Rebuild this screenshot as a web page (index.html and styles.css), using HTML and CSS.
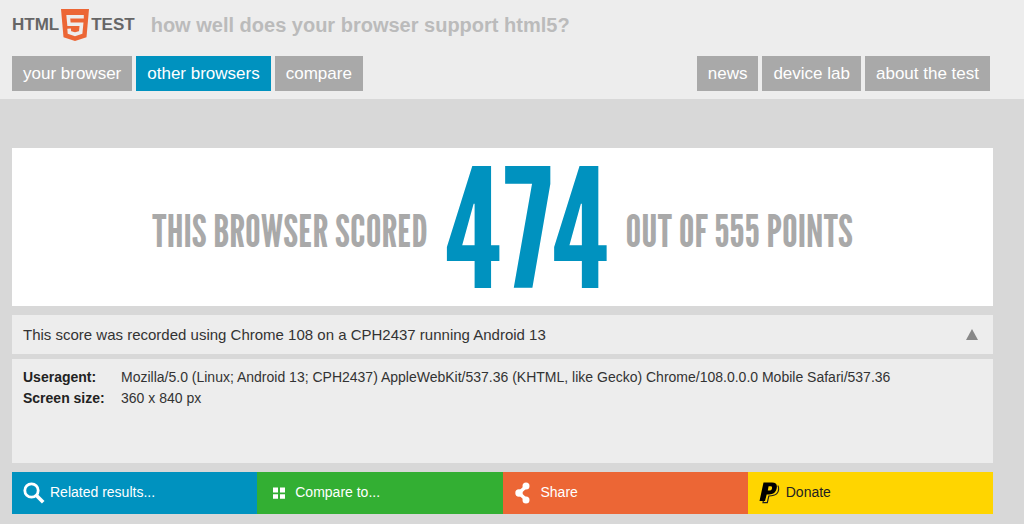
FILE: index.html
```html
<!DOCTYPE html>
<html lang="en">

<head>
  <meta charset="UTF-8" />
  <meta name="viewport" content="width=device-width, initial-scale=1" />
  <title>HTML5test - How well does your browser support HTML5?</title>
  <link rel="stylesheet" href="styles.css">
</head>

<body>
  <header class="header">
    <div class="brand">
      <a href="#" class="logo">
        <span>HTML</span>
        <svg class="shield" viewBox="0 0 28 32" role="img" aria-label="5">
          <path fill="#ec6635" d="M0 0h28l-2.500 28.200L14 32 2.500 28.200z" />
          <path fill="none" stroke="#ededed" stroke-width="3.600" d="M22.800 7.800H7.300l.7 7.500h12.500l-.8 8.200L14 25.300l-5.600-1.800-.3-3.900" />
        </svg>
        <span>TEST</span>
      </a>
      <h1>how well does your browser support html5?</h1>
    </div>

    <nav class="nav">
      <div class="nav-group">
        <a href="#">your browser</a>
        <a href="#" class="selected">other browsers</a>
        <a href="#">compare</a>
      </div>
      <div class="nav-group">
        <a href="#">news</a>
        <a href="#">device lab</a>
        <a href="#">about the test</a>
      </div>
    </nav>
  </header>

  <main class="page">
    <h2 class="score">
      <span>THIS BROWSER SCORED</span>
      <strong>474</strong>
      <span>OUT OF 555 POINTS</span>
    </h2>

    <button class="recorded" type="button" aria-expanded="true">
      <span>This score was recorded using Chrome 108 on a CPH2437 running Android 13</span>
      <svg class="arrow" viewBox="0 0 12 11" aria-hidden="true">
        <path d="M6 0l6 11H0z" />
      </svg>
    </button>

    <div class="details">
      <table>
        <tr>
          <th scope="row">Useragent:</th>
          <td>Mozilla/5.0 (Linux; Android 13; CPH2437) AppleWebKit/537.36 (KHTML, like Gecko) Chrome/108.0.0.0 Mobile Safari/537.36</td>
        </tr>
        <tr>
          <th scope="row">Screen size:</th>
          <td>360 x 840 px</td>
        </tr>
      </table>
    </div>

    <div class="actions">
      <button class="related" type="button">
        <svg viewBox="0 0 22 22" aria-hidden="true">
          <circle cx="8.500" cy="8.500" r="6.700" fill="none" stroke="#fff" stroke-width="2.800" />
          <path fill="none" stroke="#fff" stroke-width="3.600" d="M13 13l7.200 7.200" />
        </svg>
        <span>Related results...</span>
      </button>
      <button class="compare" type="button">
        <svg viewBox="0 0 22 22" aria-hidden="true">
          <path fill="#fff" d="M5 5.500h5v5H5zM12 5.500h5v5h-5zM5 12.300h5v4.500H5zM12 12.300h5v4.500h-5z" />
        </svg>
        <span>Compare to...</span>
      </button>
      <button class="share" type="button">
        <svg viewBox="0 0 22 22" aria-hidden="true">
          <path fill="none" stroke="#fff" stroke-width="3.500" d="M12 4.500L5 11l7 6.500" />
          <circle cx="12" cy="4" r="3.500" fill="#fff" />
          <circle cx="5" cy="11" r="3.700" fill="#fff" />
          <circle cx="12" cy="18" r="3.500" fill="#fff" />
        </svg>
        <span>Share</span>
      </button>
      <button class="donate" type="button">
        <svg viewBox="0 0 22 22" aria-hidden="true">
          <path fill="none" stroke="#222" stroke-width="1.200" d="M18.800 3.500c1.700 2.200.8 6.400-1 8.200-1.900 2-4.500 2.300-8 2.300L8.300 20.700H4l.3-1.700" />
          <path fill="#000" fill-rule="evenodd" d="M4.500.5H13c4 0 5.500 2.200 4.700 5.800-.9 4.300-3.500 6.200-7.500 6.200H7.700L6 19H.5zm5.100 3.800l-.8 4.200h1.300c1.700 0 2.600-.6 2.900-2.100.3-1.400-.3-2.100-1.800-2.100z" />
        </svg>
        <span>Donate</span>
      </button>
    </div>
  </main>
</body>

</html>
```

FILE: styles.css
```css
* {
  box-sizing: border-box;
}

body {
  margin: 0;
  background: #d8d8d8;
  color: #333;
  font-family: Arial, "Liberation Sans", sans-serif;
  font-size: 14px;
}

a {
  text-decoration: none;
}

button {
  border: 0;
  margin: 0;
  font-family: inherit;
  text-align: left;
  cursor: pointer;
}

.header {
  background: #ededed;
  padding: 9px 34px 8px 12px;
}

.brand {
  display: flex;
  align-items: center;
  gap: 16px;
  height: 32px;
}

.logo {
  display: flex;
  align-items: center;
  gap: 2px;
  color: #666;
  font-size: 17px;
  font-weight: bold;
}

.shield {
  width: 28px;
  height: 32px;
}

.brand h1 {
  margin: 0;
  color: #bbb;
  font-size: 20px;
}

.nav {
  display: flex;
  justify-content: space-between;
  margin-top: 15px;
}

.nav-group {
  display: flex;
  gap: 4px;
}

.nav a {
  padding: 0 11px;
  background: #a9a9a9;
  color: #fff;
  font-size: 17px;
  line-height: 35px;
}

.nav .selected,
.nav a:hover {
  background: #0092bf;
}

.page {
  padding: 49px 31px 10px 12px;
}

.score {
  display: flex;
  justify-content: center;
  align-items: center;
  gap: 16px;
  margin: 0 0 9px;
  height: 158px;
  background: #fff;
  color: #a9a9a9;
  font-family: "League Gothic", "Liberation Sans Narrow", "Liberation Sans", sans-serif;
  font-size: 44px;
  font-weight: normal;
  line-height: 1;
}

.score span {
  padding-top: 8px;
}

.score strong {
  color: #0092bf;
  font-size: 166px;
  font-weight: normal;
}

.recorded {
  display: flex;
  justify-content: space-between;
  align-items: center;
  width: 100%;
  padding: 0 15px 0 11px;
  background: #ededed;
  color: #333;
  font-size: 15px;
  line-height: 39px;
}

.arrow {
  width: 12px;
  height: 11px;
  fill: #888;
}

.details {
  min-height: 104px;
  margin: 5px 0 9px;
  padding: 8px 11px;
  background: #ededed;
}

.details table {
  border-collapse: collapse;
  line-height: 21px;
}

.details th,
.details td {
  padding: 0;
  text-align: left;
  vertical-align: top;
}

.details th {
  width: 98px;
  color: #222;
}

.actions {
  display: grid;
  grid-template-columns: repeat(4, 1fr);
}

.actions button {
  display: flex;
  align-items: center;
  gap: 5px;
  height: 42px;
  padding: 0 11px;
  color: #fff;
  font-size: 14px;
}

.actions svg {
  width: 22px;
  height: 22px;
}

.actions span {
  padding-bottom: 3px;
}

.actions .related {
  background: #0092bf;
}

.actions .compare {
  background: #33af33;
}

.actions .share {
  background: #ec6635;
}

.actions .donate {
  background: #ffd500;
  color: #222;
}
```
